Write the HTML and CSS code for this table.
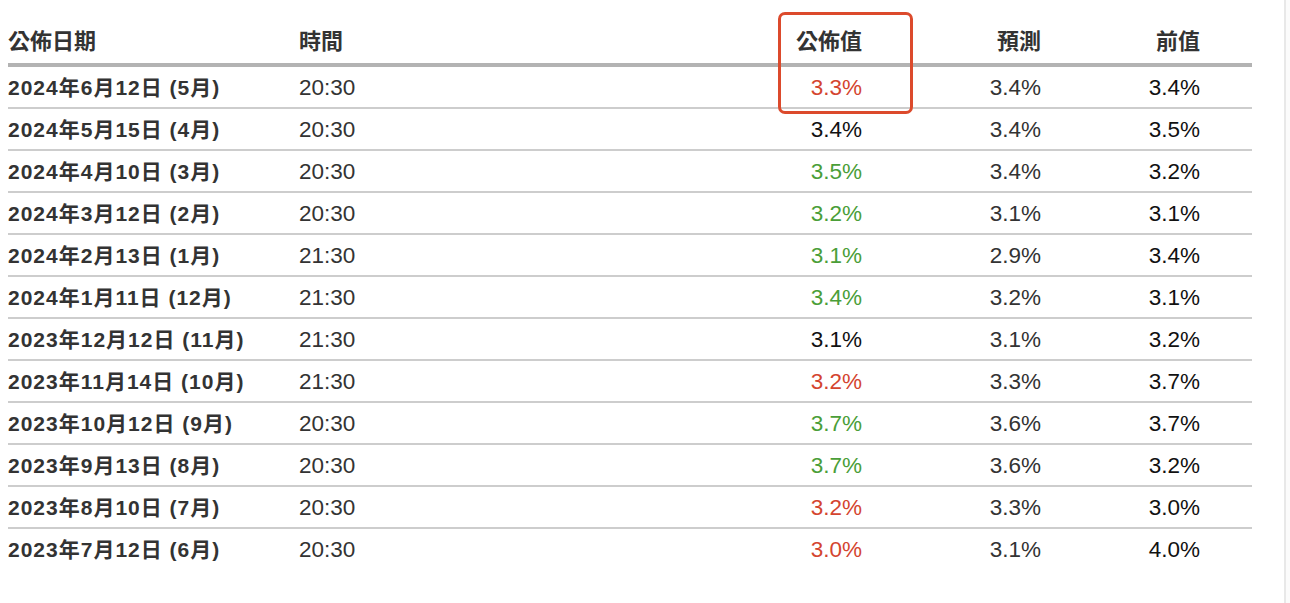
FILE: index.html
```html
<!DOCTYPE html>
<html lang="zh-Hant">
<head>
<meta charset="utf-8">
<link rel="stylesheet" href="styles.css">
</head>
<body>
<div class="page">
  <div class="table-wrap">
    <table class="data">
      <colgroup>
        <col class="c-date"><col class="c-time"><col class="c-act"><col class="c-fc"><col class="c-prev"><col class="c-pad">
      </colgroup>
      <thead>
        <tr><th class="l">公佈日期</th><th class="l">時間</th><th class="r">公佈值</th><th class="r">預測</th><th class="r">前值</th><th></th></tr>
      </thead>
      <tbody>
        <tr><td class="date">2024年6月12日 (5月)</td><td class="time">20:30</td><td class="r red">3.3%</td><td class="r fc">3.4%</td><td class="r prev">3.4%</td><td></td></tr>
        <tr><td class="date">2024年5月15日 (4月)</td><td class="time">20:30</td><td class="r blk">3.4%</td><td class="r fc">3.4%</td><td class="r prev">3.5%</td><td></td></tr>
        <tr><td class="date">2024年4月10日 (3月)</td><td class="time">20:30</td><td class="r grn">3.5%</td><td class="r fc">3.4%</td><td class="r prev">3.2%</td><td></td></tr>
        <tr><td class="date">2024年3月12日 (2月)</td><td class="time">20:30</td><td class="r grn">3.2%</td><td class="r fc">3.1%</td><td class="r prev">3.1%</td><td></td></tr>
        <tr><td class="date">2024年2月13日 (1月)</td><td class="time">21:30</td><td class="r grn">3.1%</td><td class="r fc">2.9%</td><td class="r prev">3.4%</td><td></td></tr>
        <tr><td class="date">2024年1月11日 (12月)</td><td class="time">21:30</td><td class="r grn">3.4%</td><td class="r fc">3.2%</td><td class="r prev">3.1%</td><td></td></tr>
        <tr><td class="date">2023年12月12日 (11月)</td><td class="time">21:30</td><td class="r blk">3.1%</td><td class="r fc">3.1%</td><td class="r prev">3.2%</td><td></td></tr>
        <tr><td class="date">2023年11月14日 (10月)</td><td class="time">21:30</td><td class="r red">3.2%</td><td class="r fc">3.3%</td><td class="r prev">3.7%</td><td></td></tr>
        <tr><td class="date">2023年10月12日 (9月)</td><td class="time">20:30</td><td class="r grn">3.7%</td><td class="r fc">3.6%</td><td class="r prev">3.7%</td><td></td></tr>
        <tr><td class="date">2023年9月13日 (8月)</td><td class="time">20:30</td><td class="r grn">3.7%</td><td class="r fc">3.6%</td><td class="r prev">3.2%</td><td></td></tr>
        <tr><td class="date">2023年8月10日 (7月)</td><td class="time">20:30</td><td class="r red">3.2%</td><td class="r fc">3.3%</td><td class="r prev">3.0%</td><td></td></tr>
        <tr><td class="date">2023年7月12日 (6月)</td><td class="time">20:30</td><td class="r red">3.0%</td><td class="r fc">3.1%</td><td class="r prev">4.0%</td><td></td></tr>
      </tbody>
    </table>
    <div class="highlight"></div>
  </div>
</div>
</body>
</html>
```

FILE: styles.css
```css
html, body {
  margin: 0;
  padding: 0;
  background: #fbfbfb;
}
body {
  font-family: "Liberation Sans", "Noto Sans CJK TC", sans-serif;
  color: #333;
}
.page {
  width: 1286px;
  height: 603px;
  background: #fff;
  border-right: 2px solid #e8e8e8;
  box-sizing: border-box;
  padding-left: 8px;
}
.table-wrap {
  position: relative;
  width: 1244px;
}
.data {
  width: 1244px;
  table-layout: fixed;
  border-collapse: separate;
  border-spacing: 0;
}
.c-date { width: 291px; }
.c-time { width: 300px; }
.c-act { width: 263px; }
.c-fc { width: 179px; }
.c-prev { width: 159px; }
.c-pad { width: 52px; }
.data th {
  padding: 30px 0 9px 0;
  vertical-align: middle;
  font-size: 22px;
  line-height: 24px;
  font-weight: bold;
  color: #333;
  border-bottom: 4px solid #b3b3b3;
}
.data td {
  padding: 9px 0 7px 0;
  vertical-align: middle;
  font-size: 22.5px;
  line-height: 24px;
  white-space: nowrap;
  border-bottom: 2px solid #cdcdcd;
}
.data tbody tr:last-child td {
  border-bottom: none;
}
.l { text-align: left; }
.r { text-align: right; }
.data td.date {
  font-weight: bold;
  font-size: 21px;
  letter-spacing: 1px;
  color: #333;
}
.time { color: #333; }
.red { color: #d4452f; }
.grn { color: #4a9e38; }
.blk { color: #111; }
.fc { color: #333; }
.prev { color: #111; }
.highlight {
  position: absolute;
  left: 770px;
  top: 12px;
  width: 135px;
  height: 102px;
  box-sizing: border-box;
  border: 3px solid #dc4a2c;
  border-radius: 7px;
}
```
